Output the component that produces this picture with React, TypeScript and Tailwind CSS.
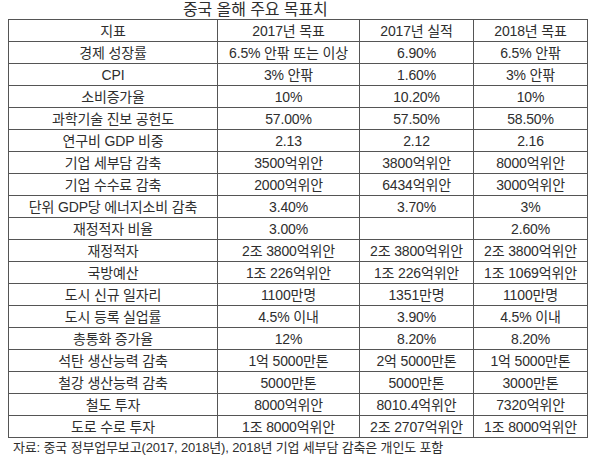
import React from "react";

const rows: string[][] = [
  ["경제 성장률", "6.5% 안팎 또는 이상", "6.90%", "6.5% 안팎"],
  ["CPI", "3% 안팎", "1.60%", "3% 안팎"],
  ["소비증가율", "10%", "10.20%", "10%"],
  ["과학기술 진보 공헌도", "57.00%", "57.50%", "58.50%"],
  ["연구비 GDP 비중", "2.13", "2.12", "2.16"],
  ["기업 세부담 감축", "3500억위안", "3800억위안", "8000억위안"],
  ["기업 수수료 감축", "2000억위안", "6434억위안", "3000억위안"],
  ["단위 GDP당 에너지소비 감축", "3.40%", "3.70%", "3%"],
  ["재정적자 비율", "3.00%", "", "2.60%"],
  ["재정적자", "2조 3800억위안", "2조 3800억위안", "2조 3800억위안"],
  ["국방예산", "1조 226억위안", "1조 226억위안", "1조 1069억위안"],
  ["도시 신규 일자리", "1100만명", "1351만명", "1100만명"],
  ["도시 등록 실업률", "4.5% 이내", "3.90%", "4.5% 이내"],
  ["총통화 증가율", "12%", "8.20%", "8.20%"],
  ["석탄 생산능력 감축", "1억 5000만톤", "2억 5000만톤", "1억 5000만톤"],
  ["철강 생산능력 감축", "5000만톤", "5000만톤", "3000만톤"],
  ["철도 투자", "8000억위안", "8010.4억위안", "7320억위안"],
  ["도로 수로 투자", "1조 8000억위안", "2조 2707억위안", "1조 8000억위안"],
];

const font = {
  fontFamily: '"Liberation Sans", "Noto Sans CJK KR", sans-serif',
};

export default function App() {
  return (
    <div
      className="w-[600px] h-[458px] bg-white text-[#2e2e2e] overflow-hidden"
      style={font}
    >
      <div className="h-[19px] pl-[183px] text-[16px] leading-[19px] tracking-[-0.1px]">
        중국 올해 주요 목표치
      </div>
      <div className="pl-[8px]">
        <table className="border-collapse w-[579px] table-fixed text-[14px] tracking-[-0.15px]">
          <colgroup>
            <col className="w-[209px]" />
            <col className="w-[142px]" />
            <col className="w-[114px]" />
            <col className="w-[114px]" />
          </colgroup>
          <tbody>
            <tr className="h-[22px]">
              {["지표", "2017년 목표", "2017년 실적", "2018년 목표"].map((h, i) => (
                <td
                  key={i}
                  className="border border-[#555555] text-center p-0 leading-[20px] font-normal whitespace-nowrap"
                >
                  {h}
                </td>
              ))}
            </tr>
            {rows.map((r, ri) => (
              <tr key={ri} className="h-[22px]">
                {r.map((c, ci) => (
                  <td
                    key={ci}
                    className="border border-[#555555] text-center p-0 leading-[20px] whitespace-nowrap"
                  >
                    {c}
                  </td>
                ))}
              </tr>
            ))}
          </tbody>
        </table>
      </div>
      <div className="pl-[13px] pt-[2px] text-[13px] leading-[16px] tracking-[-0.15px]">
        자료: 중국 정부업무보고(2017, 2018년), 2018년 기업 세부담 감축은 개인도 포함
      </div>
    </div>
  );
}
